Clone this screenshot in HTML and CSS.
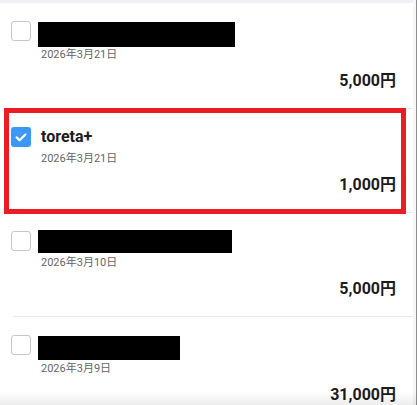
FILE: index.html
```html
<!DOCTYPE html>
<html lang="ja">
<head>
<meta charset="utf-8">
<title>list</title>
<link rel="stylesheet" href="styles.css">
</head>
<body>
<div class="frame">
  <main class="list">
    <div class="topband"></div>

    <div class="item">
      <span class="check"></span>
      <div class="content">
        <div class="title"><div class="redact r1"></div></div>
        <div class="date">2026年3月21日</div>
        <div class="price">5,000円</div>
      </div>
    </div>
    <div class="divider"></div>

    <div class="item marked">
      <span class="check on">
        <svg viewBox="0 0 20 20" width="20" height="20"><path d="M5.6 10.4 L8.6 13.3 L14.4 7.4" fill="none" stroke="#fff" stroke-width="2.2" stroke-linecap="round" stroke-linejoin="round"/></svg>
      </span>
      <div class="content">
        <div class="title">toreta+</div>
        <div class="date">2026年3月21日</div>
        <div class="price">1,000円</div>
      </div>
      <div class="highlight"></div>
    </div>
    <div class="divider"></div>

    <div class="item">
      <span class="check"></span>
      <div class="content">
        <div class="title"><div class="redact r2"></div></div>
        <div class="date">2026年3月10日</div>
        <div class="price">5,000円</div>
      </div>
    </div>
    <div class="divider"></div>

    <div class="item">
      <span class="check"></span>
      <div class="content">
        <div class="title"><div class="redact r3"></div></div>
        <div class="date">2026年3月9日</div>
        <div class="price">31,000円</div>
      </div>
    </div>
    <div class="divider"></div>
  </main>
  <div class="gutter"></div>
</div>
<div class="bottomfade"></div>
</body>
</html>
```
FILE: styles.css
```css
html, body {
  margin: 0;
  padding: 0;
  background: #ffffff;
}
body {
  font-family: Roboto, "Noto Sans CJK JP", "Liberation Sans", sans-serif;
  color: #1e1e1e;
}
.frame {
  display: flex;
  height: 405px;
  overflow: hidden;
}
.list {
  width: 413px;
  flex: none;
  background: #ffffff;
}
.gutter {
  width: 3px;
  background: #f7f7f8;
  border-right: 1px solid #8e8e8e;
}
.topband {
  height: 3px;
  background: #eef0f4;
}
.item {
  position: relative;
  display: flex;
  gap: 10px;
  padding: 17px 17px 16px 11px;
}
.check {
  flex: none;
  box-sizing: border-box;
  width: 20px;
  height: 20px;
  margin-top: 1px;
  border: 1px solid #c6c6c6;
  border-radius: 3px;
  background: #fff;
}
.check.on {
  border: none;
  background: #3c98f8;
}
.check svg {
  display: block;
}
.content {
  flex: 1;
  min-width: 0;
}
.title {
  height: 22px;
  line-height: 22px;
  font-size: 16px;
  font-weight: 700;
  color: #1c1c1c;
}
.redact {
  background: #000;
  margin-left: -3px;
}
.r1 { width: 197px; height: 25px; margin-top: 2px; }
.r2 { width: 194px; height: 23px; margin-top: 0; }
.r3 { width: 142px; height: 24px; margin-top: 2px; }
.date {
  margin-top: 3px;
  height: 16px;
  line-height: 16px;
  font-size: 11px;
  color: #666666;
}
.price {
  margin-top: 7px;
  height: 22px;
  line-height: 22px;
  font-size: 16px;
  font-weight: 700;
  text-align: right;
  color: #1c1c1c;
}
.divider {
  height: 1px;
  margin-left: 13px;
  background: #e8e8e8;
}
.highlight {
  position: absolute;
  left: 4px;
  right: 7px;
  top: -1px;
  bottom: -2px;
  border: 5px solid #ec1c24;
  pointer-events: none;
}
.bottomfade {
  position: fixed;
  left: 0;
  right: 0;
  bottom: 0;
  height: 14px;
  background: linear-gradient(rgba(0,0,0,0), rgba(0,0,0,0.07));
  pointer-events: none;
}
```
